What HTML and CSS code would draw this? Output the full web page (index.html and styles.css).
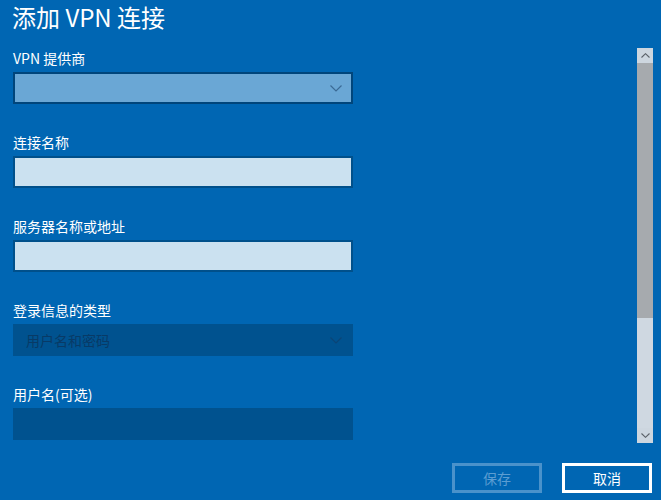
FILE: index.html
```html
<!DOCTYPE html>
<html lang="zh-CN">
<head>
<meta charset="utf-8">
<title>添加 VPN 连接</title>
<link rel="stylesheet" href="styles.css">
</head>
<body>
<div class="dialog">
  <h1 class="title">添加 VPN 连接</h1>
  <div class="main">
    <div class="form">
      <div class="field">
        <div class="label">VPN 提供商</div>
        <div class="select">
          <svg class="chev" width="12" height="7" viewBox="0 0 12 7"><path d="M0.5 0.5 L6 6 L11.5 0.5" fill="none" stroke="#3b6a95" stroke-width="1.2"/></svg>
        </div>
      </div>
      <div class="field">
        <div class="label">连接名称</div>
        <div class="input"></div>
      </div>
      <div class="field">
        <div class="label">服务器名称或地址</div>
        <div class="input"></div>
      </div>
      <div class="field">
        <div class="label">登录信息的类型</div>
        <div class="select disabled">
          <span class="value">用户名和密码</span>
          <svg class="chev" width="12" height="7" viewBox="0 0 12 7"><path d="M0.5 0.5 L6 6 L11.5 0.5" fill="none" stroke="#0b4576" stroke-width="1.2"/></svg>
        </div>
      </div>
      <div class="field">
        <div class="label">用户名(可选)</div>
        <div class="input disabled"></div>
      </div>
    </div>
    <div class="scrollbar">
      <div class="sb-btn">
        <svg width="9" height="5" viewBox="0 0 9 5"><path d="M0.5 4.5 L4.5 0.7 L8.5 4.5" fill="none" stroke="#5b6168" stroke-width="1.1"/></svg>
      </div>
      <div class="sb-thumb"></div>
      <div class="sb-track"></div>
      <div class="sb-btn">
        <svg width="9" height="5" viewBox="0 0 9 5"><path d="M0.5 0.5 L4.5 4.3 L8.5 0.5" fill="none" stroke="#5b6168" stroke-width="1.1"/></svg>
      </div>
    </div>
  </div>
  <div class="footer">
    <button class="btn btn-save">保存</button>
    <button class="btn btn-cancel">取消</button>
  </div>
</div>
</body>
</html>
```
FILE: styles.css
```css
html, body {
  margin: 0;
  padding: 0;
}
body {
  background: #0066b3;
  font-family: "Noto Sans CJK SC", "Noto Sans", sans-serif;
  color: #ffffff;
  width: 661px;
  height: 500px;
  overflow: hidden;
}
.dialog {
  display: flex;
  flex-direction: column;
  height: 500px;
}
.title {
  margin: 0;
  padding: 2px 0 0 12px;
  height: 46px;
  font-size: 24px;
  line-height: 30px;
  font-weight: normal;
}
.main {
  display: flex;
  height: 395px;
  overflow: hidden;
}
.form {
  margin-left: 13px;
  width: 340px;
}
.field {
  display: flex;
  flex-direction: column;
  gap: 4px;
  margin-bottom: 28px;
}
.label {
  font-size: 14px;
  line-height: 20px;
  height: 20px;
}
.select, .input {
  box-sizing: border-box;
  height: 32px;
  width: 340px;
  display: flex;
  align-items: center;
}
.select {
  background: #6aa7d5;
  border: 2px solid #00457b;
  justify-content: flex-end;
  padding-right: 9px;
}
.input {
  background: #cbe1f0;
  border: 2px solid #00508b;
}
.select.disabled, .input.disabled {
  background: #00528f;
  border-color: #00528f;
}
.select.disabled {
  justify-content: space-between;
  padding-left: 11px;
}
.value {
  font-size: 14px;
  color: #083a66;
}
.scrollbar {
  margin-left: auto;
  margin-right: 8px;
  width: 16px;
  display: flex;
  flex-direction: column;
}
.sb-btn {
  height: 15px;
  background: #cdd6df;
  display: flex;
  align-items: center;
  justify-content: center;
}
.sb-thumb {
  height: 255px;
  background: #a6aaae;
}
.sb-track {
  flex: 1;
  background: #cfd8e1;
}
.footer {
  display: flex;
  justify-content: flex-end;
  gap: 20px;
  padding-top: 20px;
  padding-right: 9px;
}
.btn {
  box-sizing: border-box;
  width: 90px;
  height: 30px;
  background: transparent;
  font-family: "Noto Sans CJK SC", "Noto Sans", sans-serif;
  font-size: 14px;
  padding: 0;
}
.btn-save {
  border: 3px solid #4a92cb;
  color: #5b9dd2;
}
.btn-cancel {
  border: 3px solid #ffffff;
  color: #ffffff;
}
```
